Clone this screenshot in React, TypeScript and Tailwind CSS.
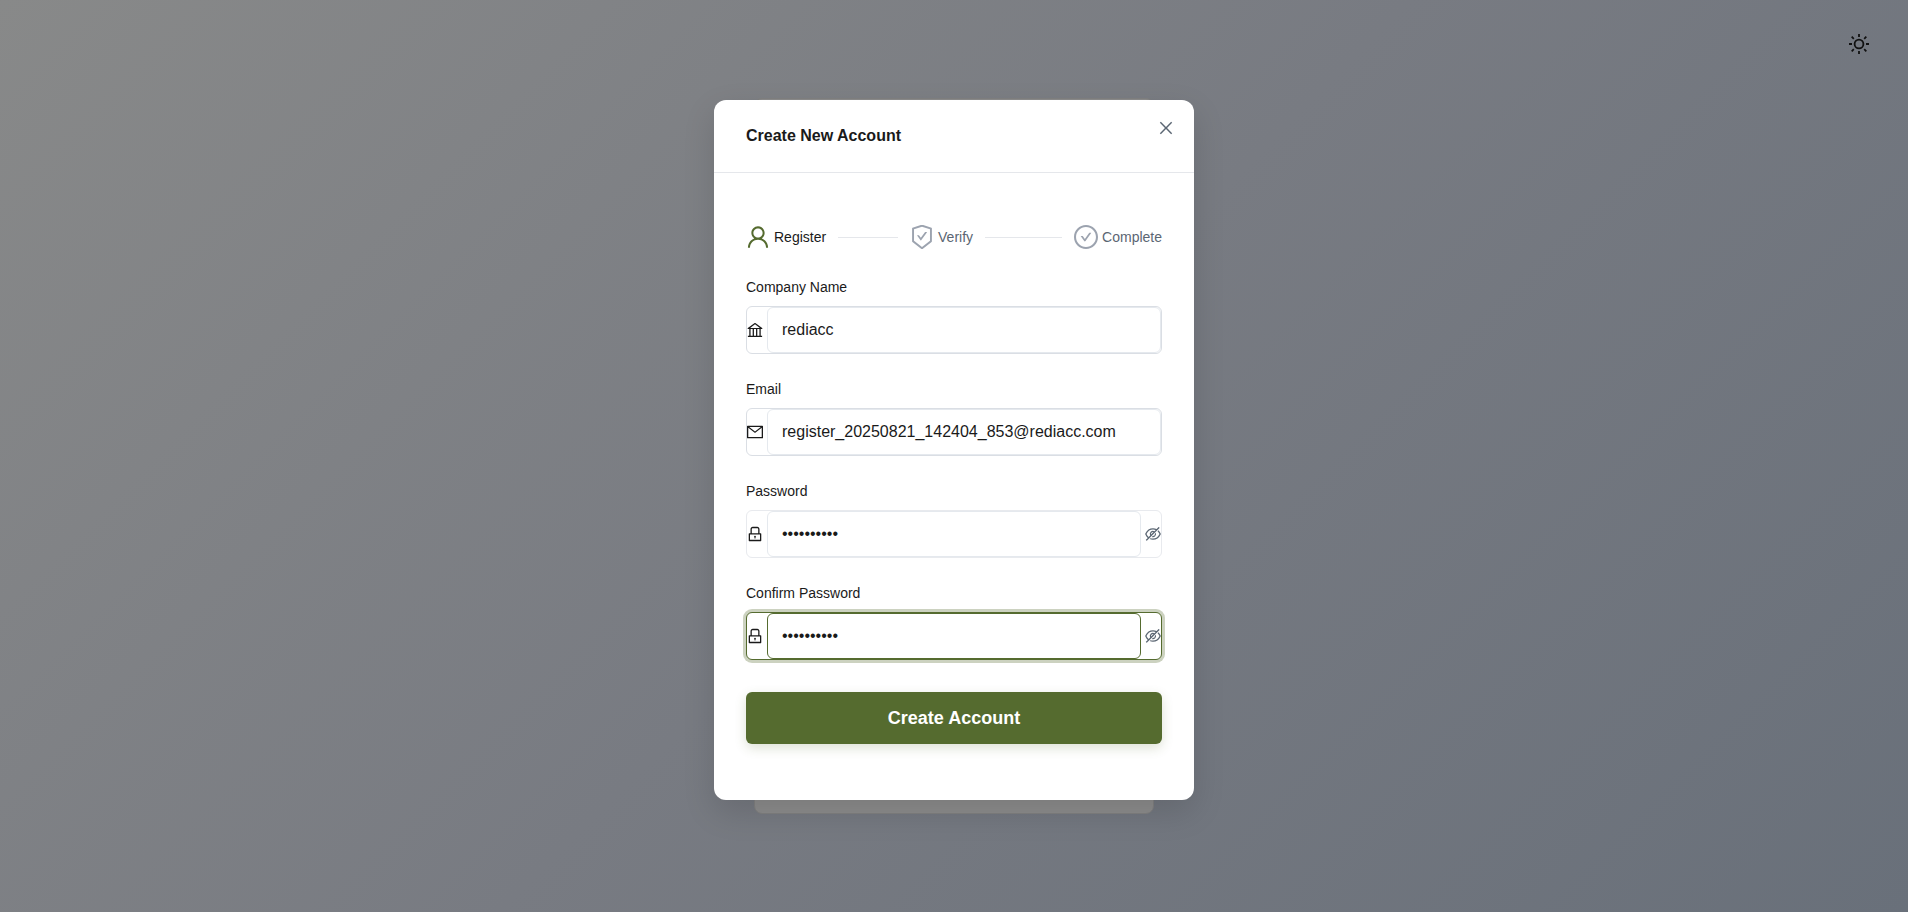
import { useState } from "react";
import type { ReactNode } from "react";
import {
  AiOutlineBank,
  AiOutlineCheckCircle,
  AiOutlineClose,
  AiOutlineEye,
  AiOutlineEyeInvisible,
  AiOutlineLock,
  AiOutlineMail,
  AiOutlineSafetyCertificate,
  AiOutlineUser,
} from "react-icons/ai";

// Trims the empty margin that the outline icons carry around their glyphs.
const TIGHT_BOX = "64 64 896 896";

function SunIcon() {
  return (
    <svg viewBox="0 0 20 20" className="size-5" fill="none" stroke="currentColor" strokeWidth="1.8" aria-hidden="true">
      <circle cx="10" cy="10" r="4.4" />
      <path d="M10 0v3M10 17v3M0 10h3M17 10h3M2.7 2.7l2.1 2.1M15.2 15.2l2.1 2.1M2.7 17.3l2.1-2.1M15.2 4.8l2.1-2.1" />
    </svg>
  );
}

type FieldProps = {
  id: string;
  label: string;
  value: string;
  icon: ReactNode;
  type?: "text" | "email" | "password";
  active?: boolean;
};

function Field({ id, label, value, icon, type = "text", active = false }: FieldProps) {
  const [visible, setVisible] = useState(false);
  const secret = type === "password";
  const outer = active
    ? "border-[#556b2f] ring-3 ring-[#556b2f]/30"
    : secret
      ? "border-[#e8eaee]"
      : "border-[#dadee4]";
  const inner = active ? "border-[#556b2f]" : "border-[#e5e9ee]";
  return (
    <div className="flex flex-col gap-2">
      <label htmlFor={id} className="text-sm leading-[22px]">
        {label}
      </label>
      <div className={`flex h-12 items-stretch rounded-md border bg-white ${outer}`}>
        <span className="mr-1 flex items-center text-base">{icon}</span>
        <input
          id={id}
          type={secret && visible ? "text" : type}
          defaultValue={value}
          className={`min-w-0 flex-1 rounded-md border bg-white px-3.5 text-base outline-none ${inner}`}
        />
        {secret && (
          <button
            type="button"
            aria-label="Toggle password visibility"
            onClick={() => setVisible(!visible)}
            className="ml-1 flex items-center text-base text-[#5b6673]"
          >
            {visible ? <AiOutlineEye viewBox={TIGHT_BOX} /> : <AiOutlineEyeInvisible viewBox={TIGHT_BOX} />}
          </button>
        )}
      </div>
    </div>
  );
}

type StepProps = { icon: ReactNode; title: string; current?: boolean; last?: boolean };

function Step({ icon, title, current = false, last = false }: StepProps) {
  return (
    <li className={last ? "flex items-center" : "flex flex-1 items-center"} aria-current={current ? "step" : undefined}>
      <span className={current ? "mr-1 text-2xl text-[#556b2f]" : "mr-1 text-2xl text-[#9ca3af]"}>{icon}</span>
      <span className={current ? "text-sm" : "text-sm text-[#5b6673]"}>{title}</span>
      {!last && <span className="mx-3 h-px flex-1 bg-[#e5e7eb]" />}
    </li>
  );
}

export default function App() {
  return (
    <div className="relative flex min-h-screen items-start justify-center bg-linear-135 from-[#888989] via-[#787b82] to-[#69707a] py-25 font-['Liberation_Sans',Arial,sans-serif] text-[#1a1a1a]">
      <button type="button" aria-label="Toggle theme" className="absolute top-8.5 right-[39px] text-[#111]">
        <SunIcon />
      </button>
      <div className="absolute inset-x-0 top-24.5 bottom-24.5 mx-auto w-100 rounded-lg border border-[#808080] bg-[#8c8c8c]" />
      <div
        role="dialog"
        aria-labelledby="dialog-title"
        className="relative w-120 rounded-xl bg-white shadow-[0_12px_32px_rgba(0,0,0,0.13)]"
      >
        <header className="border-b border-[#e5e7eb] px-8 py-6">
          <h1 id="dialog-title" className="text-base leading-6 font-bold">
            Create New Account
          </h1>
          <button type="button" aria-label="Close" className="absolute top-5 right-5 text-base text-[#5b6673]">
            <AiOutlineClose viewBox={TIGHT_BOX} />
          </button>
        </header>
        <form className="px-8 pt-13 pb-14" onSubmit={(event) => event.preventDefault()}>
          <ol className="mb-[27px] flex items-center">
            <Step current icon={<AiOutlineUser viewBox={TIGHT_BOX} />} title="Register" />
            <Step icon={<AiOutlineSafetyCertificate viewBox={TIGHT_BOX} />} title="Verify" />
            <Step last icon={<AiOutlineCheckCircle viewBox={TIGHT_BOX} />} title="Complete" />
          </ol>
          <div className="flex flex-col gap-6">
            <Field id="company" label="Company Name" value="rediacc" icon={<AiOutlineBank viewBox={TIGHT_BOX} />} />
            <Field
              id="email"
              type="email"
              label="Email"
              value="register_20250821_142404_853@rediacc.com"
              icon={<AiOutlineMail viewBox={TIGHT_BOX} />}
            />
            <Field
              id="password"
              type="password"
              label="Password"
              value="Passw0rd!1"
              icon={<AiOutlineLock viewBox={TIGHT_BOX} />}
            />
            <Field
              id="confirm"
              type="password"
              label="Confirm Password"
              value="Passw0rd!1"
              icon={<AiOutlineLock viewBox={TIGHT_BOX} />}
              active
            />
          </div>
          <button
            type="submit"
            className="mt-8 h-13 w-full rounded-md bg-[#556b2f] text-lg font-bold text-white shadow-[0_4px_12px_rgba(85,107,47,0.2)]"
          >
            Create Account
          </button>
        </form>
      </div>
    </div>
  );
}
